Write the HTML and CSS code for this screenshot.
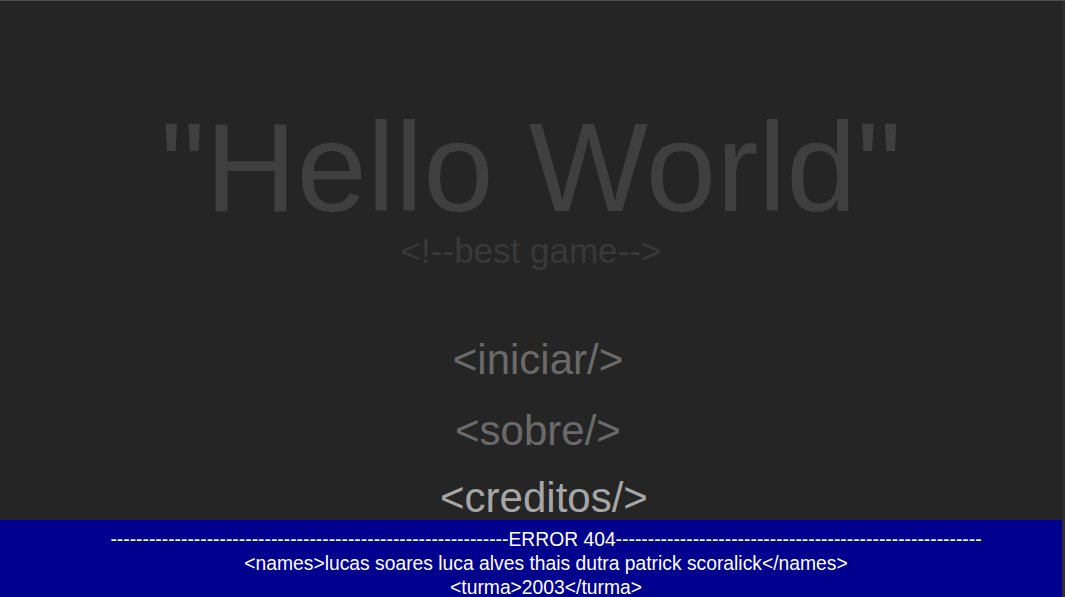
FILE: index.html
```html
<!DOCTYPE html>
<html lang="pt">
<head>
<meta charset="utf-8">
<title>Hello World</title>
<link rel="stylesheet" href="styles.css">
</head>
<body>
<div class="frame">
  <div class="screen">
    <main class="stage">
      <h1 class="title">"Hello World"</h1>
      <p class="subtitle">&lt;!--best game--&gt;</p>
      <nav class="menu">
        <a class="menu-item item-iniciar">&lt;iniciar/&gt;</a>
        <a class="menu-item item-sobre">&lt;sobre/&gt;</a>
        <a class="menu-item item-creditos is-active">&lt;creditos/&gt;</a>
      </nav>
    </main>
    <footer class="footer">
      <div class="footer-line">--------------------------------------------------------------ERROR 404---------------------------------------------------------</div>
      <div class="footer-line">&lt;names&gt;lucas soares luca alves thais dutra patrick scoralick&lt;/names&gt;</div>
      <div class="footer-line">&lt;turma&gt;2003&lt;/turma&gt;</div>
    </footer>
  </div>
  <div class="edge"></div>
</div>
</body>
</html>
```

FILE: styles.css
```css
* { box-sizing: border-box; }
html, body {
  margin: 0;
  padding: 0;
  height: 597px;
  overflow: hidden;
  background: #252525;
  font-family: "Liberation Sans", Arial, sans-serif;
}
.frame {
  display: flex;
  height: 597px;
  border-top: 1px solid #4e4e4e;
}
.screen {
  flex: 1;
  display: flex;
  flex-direction: column;
  min-width: 0;
}
.edge {
  width: 3px;
  background: #2d2d2d;
}
.stage {
  height: 519px;
  display: flex;
  flex-direction: column;
  align-items: center;
}
.title {
  margin: 104px 0 0;
  font-size: 126.5px;
  line-height: 124px;
  font-weight: normal;
  color: #3f3f3f;
  white-space: nowrap;
}
.subtitle {
  margin: 5px 0 0;
  font-size: 35px;
  line-height: 34px;
  color: #393939;
}
.menu {
  margin-top: 71px;
  display: flex;
  flex-direction: column;
  align-items: center;
  padding-left: 14px;
}
.menu-item {
  font-size: 42px;
  line-height: 42px;
  color: #6a6a6a;
}
.item-sobre { margin-top: 29px; }
.item-creditos { margin-top: 25px; padding-left: 12px; }
.menu-item.is-active { color: #a6a6a6; }
.footer {
  flex: 1;
  background: #00008f;
  color: #ffffff;
  padding: 8px 0 0 30px;
  text-align: center;
  font-size: 19.3px;
  line-height: 24px;
  white-space: nowrap;
  overflow: hidden;
}
```
